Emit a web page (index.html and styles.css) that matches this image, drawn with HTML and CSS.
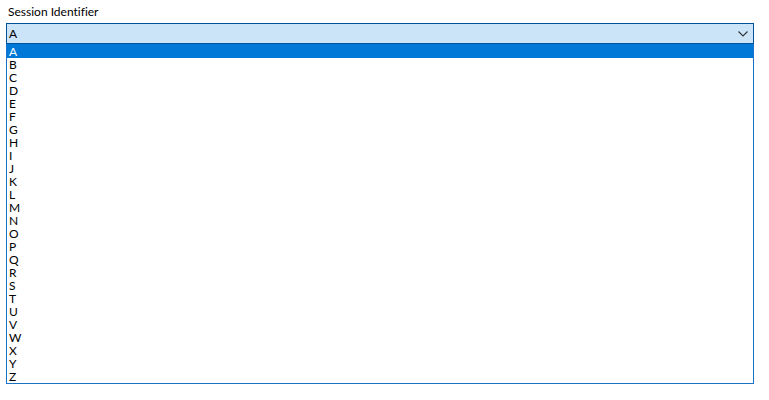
FILE: index.html
```html
<!DOCTYPE html>
<html>
<head>
<meta charset="utf-8">
<link rel="stylesheet" href="styles.css">
</head>
<body>
<div class="field">
  <div class="label">Session Identifier</div>
  <div class="combo">
    <span class="value">A</span>
    <svg class="chev" width="10" height="6" viewBox="0 0 10 6"><path d="M0.5 0.5 L5 5 L9.5 0.5" fill="none" stroke="#333" stroke-width="1.1"/></svg>
  </div>
  <ul class="list">
    <li class="sel">A</li><li>B</li><li>C</li><li>D</li><li>E</li><li>F</li><li>G</li><li>H</li><li>I</li><li>J</li><li>K</li><li>L</li><li>M</li><li>N</li><li>O</li><li>P</li><li>Q</li><li>R</li><li>S</li><li>T</li><li>U</li><li>V</li><li>W</li><li>X</li><li>Y</li><li>Z</li>
  </ul>
</div>
</body>
</html>
```
FILE: styles.css
```css
html, body {
  margin: 0;
  padding: 0;
  background: #ffffff;
}
body {
  font-family: Lato, "Liberation Sans", sans-serif;
  font-size: 12px;
  font-variant-ligatures: none;
  color: #000;
}
.field {
  padding: 4px 0 0 6px;
  width: 748px;
}
.label {
  padding-left: 2px;
  height: 19px;
  line-height: 16px;
}
.combo {
  box-sizing: border-box;
  height: 21px;
  border: 1px solid #005499;
  background: #cce4f7;
  display: flex;
  align-items: center;
  justify-content: space-between;
  padding: 0 5px 0 2px;
}
.value {
  line-height: 16px;
}
.chev {
  display: block;
  margin-top: 1px;
}
.list {
  list-style: none;
  margin: 0;
  padding: 0;
  box-sizing: border-box;
  border: 1px solid #1a73c7;
  border-top-color: #0078d7;
}
.list li {
  height: 13px;
  line-height: 13px;
  padding-left: 2px;
}
.list li.sel {
  background: #0078d7;
  color: #fff;
}
```
